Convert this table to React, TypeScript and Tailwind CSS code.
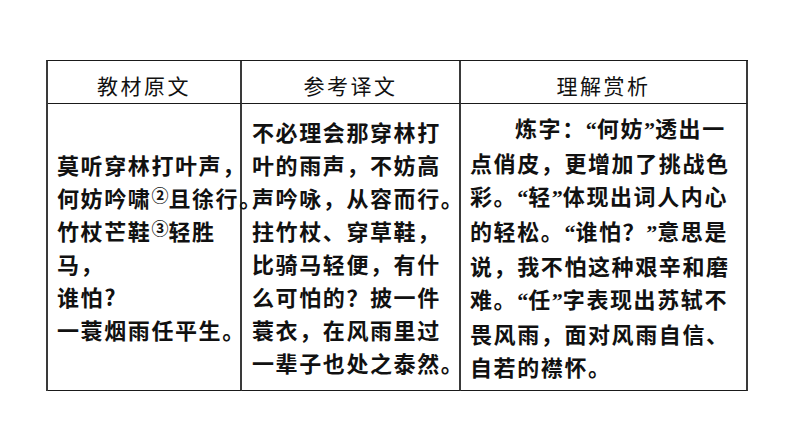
const font = { fontFamily: '"Noto Sans CJK SC", "Noto Sans CJK JP", sans-serif' };

// narrow, SimSun-like curly quotes
function Q({ c }: { c: string }) {
  return (
    <span className="tracking-normal" style={{ fontFamily: '"Liberation Serif", serif' }}>
      {c}
    </span>
  );
}

const sup = 'text-[17px] leading-none relative -top-[5px] tracking-normal';

const col1 = [
  <>莫听穿林打叶声，</>,
  <>何妨吟啸<sup className={sup}>②</sup>且徐行。</>,
  <>竹杖芒鞋<sup className={sup}>③</sup>轻胜</>,
  <>马，</>,
  <>谁怕?</>,
  <>一蓑烟雨任平生。</>,
];

const col2 = [
  '不必理会那穿林打',
  '叶的雨声，不妨高',
  '声吟咏，从容而行。',
  '拄竹杖、穿草鞋，',
  '比骑马轻便，有什',
  '么可怕的？披一件',
  '蓑衣，在风雨里过',
  '一辈子也处之泰然。',
];

const col3 = [
  <>炼字：<Q c="“" />何妨<Q c="”" />透出一</>,
  <>点俏皮，更增加了挑战色</>,
  <>彩。<Q c="“" />轻<Q c="”" />体现出词人内心</>,
  <>的轻松。<Q c="“" />谁怕？<Q c="”" />意思是</>,
  <>说，我不怕这种艰辛和磨</>,
  <>难。<Q c="“" />任<Q c="”" />字表现出苏轼不</>,
  <>畏风雨，面对风雨自信、</>,
  <>自若的襟怀。</>,
];

function Lines({ lines, indentFirst }: { lines: React.ReactNode[]; indentFirst?: boolean }) {
  return (
    <div className="flex flex-col">
      {lines.map((l, i) => (
        <div key={i} className={`whitespace-nowrap leading-[33px] ${indentFirst && i === 0 ? 'pl-[45px]' : ''}`}>
          {l}
        </div>
      ))}
    </div>
  );
}

const cell = 'border-r-2 border-b-[1.5px] border-r-[#3a3a3a] border-b-[#1a1a1a]';
const body = `h-[287px] ${cell} flex items-center text-[22px] tracking-[1.6px] font-semibold`;

export default function App() {
  return (
    <div className="w-[794px] h-[447px] bg-white pt-[60px] pl-[46px]" style={font}>
      <div className="w-[702px] border-t-[1.5px] border-l-2 border-t-[#1a1a1a] border-l-[#3a3a3a] text-[#111] grid grid-cols-[194px_219px_287px]">
        {['教材原文', '参考译文', '理解赏析'].map(h => (
          <div
            key={h}
            className={`h-[43px] ${cell} flex items-center justify-center pt-[8px] text-[21px] tracking-[2.5px]`}
          >
            {h}
          </div>
        ))}
        <div className={`${body} pl-[9px]`}>
          <Lines lines={col1} />
        </div>
        <div className={`${body} pl-[10px]`}>
          <Lines lines={col2} />
        </div>
        <div className={`${body} pl-[9px]`}>
          <Lines lines={col3} indentFirst />
        </div>
      </div>
    </div>
  );
}
